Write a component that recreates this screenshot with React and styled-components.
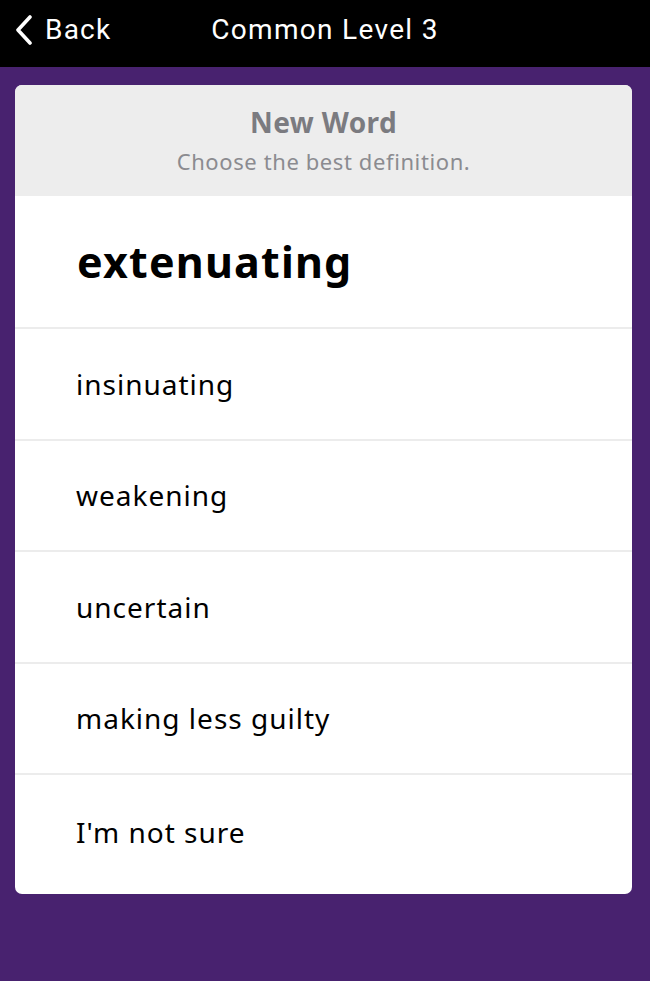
import styled, { createGlobalStyle } from "styled-components";

const GlobalStyle = createGlobalStyle`
  html, body {
    margin: 0;
    padding: 0;
    background: #48226f;
  }
  body {
    font-family: "Noto Sans", "Open Sans", sans-serif;
  }
`;

const Page = styled.div`
  min-height: 981px;
  background: #48226f;
`;

const NavBar = styled.header`
  position: relative;
  height: 67px;
  padding-bottom: 8px;
  box-sizing: border-box;
  background: #000;
  color: #fff;
  display: flex;
  align-items: center;
  justify-content: center;
  font-family: "Roboto", "Liberation Sans", sans-serif;
`;

const BackButton = styled.div`
  position: absolute;
  left: 14px;
  top: 0;
  bottom: 8px;
  display: flex;
  align-items: center;
  gap: 11px;
  font-size: 28px;
  letter-spacing: 1.2px;
`;

const NavTitle = styled.div`
  font-size: 28px;
  letter-spacing: 1.3px;
`;

const Card = styled.div`
  margin: 18px 18px 0 15px;
  background: #fff;
  border-radius: 7px;
  overflow: hidden;
`;

const CardHead = styled.div`
  background: #ededed;
  height: 111px;
  padding-bottom: 2px;
  box-sizing: border-box;
  display: flex;
  flex-direction: column;
  align-items: center;
  justify-content: center;
  gap: 7px;
`;

const HeadTitle = styled.div`
  font-size: 28px;
  font-weight: 700;
  color: #7b7b80;
  letter-spacing: 0.4px;
  line-height: 36px;
`;

const HeadSub = styled.div`
  font-size: 22px;
  color: #8b8b90;
  letter-spacing: 0.6px;
  line-height: 28px;
`;

const WordRow = styled.div`
  height: 133px;
  display: flex;
  align-items: center;
  padding-left: 62px;
  font-size: 43px;
  font-weight: 700;
  letter-spacing: 1.2px;
  color: #000;
  border-bottom: 2px solid #ececec;
  box-sizing: border-box;
`;

const Option = styled.div`
  height: ${(p) => (p.$last ? "119px" : "111.5px")};
  display: flex;
  align-items: center;
  padding-left: 61px;
  padding-bottom: ${(p) => (p.$last ? "5px" : "0")};
  font-size: 28px;
  letter-spacing: 1px;
  color: #000;
  border-bottom: ${(p) => (p.$last ? "none" : "2px solid #ececec")};
  box-sizing: border-box;
`;

const options = ["insinuating", "weakening", "uncertain", "making less guilty", "I'm not sure"];

export default function App() {
  return (
    <Page>
      <GlobalStyle />
      <NavBar>
        <BackButton>
          <svg width="20" height="30" viewBox="0 0 20 30">
            <path d="M16 2 L4 15 L16 28" fill="none" stroke="#fff" strokeWidth="3.6" strokeLinecap="round" strokeLinejoin="round" />
          </svg>
          Back
        </BackButton>
        <NavTitle>Common Level 3</NavTitle>
      </NavBar>
      <Card>
        <CardHead>
          <HeadTitle>New Word</HeadTitle>
          <HeadSub>Choose the best definition.</HeadSub>
        </CardHead>
        <WordRow>extenuating</WordRow>
        {options.map((o, i) => (
          <Option key={o} $last={i === options.length - 1}>
            {o}
          </Option>
        ))}
      </Card>
    </Page>
  );
}
